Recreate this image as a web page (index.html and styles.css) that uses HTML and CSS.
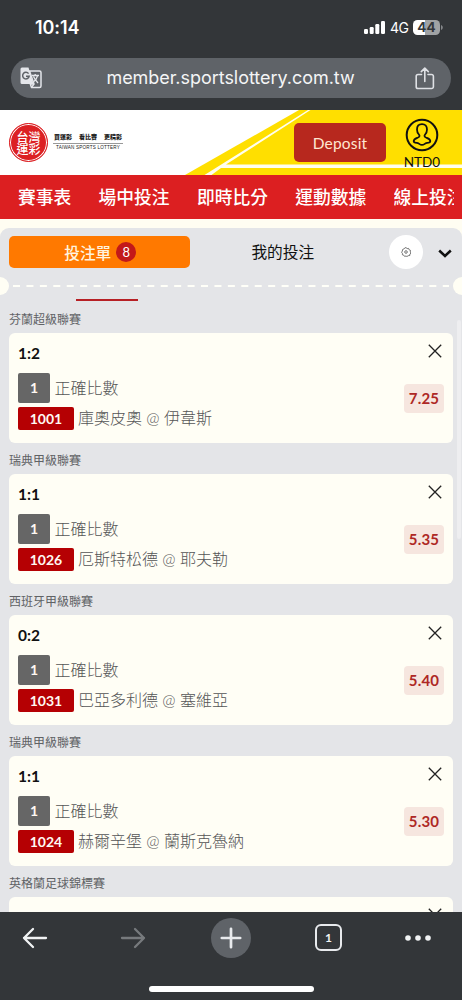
FILE: index.html
```
<!DOCTYPE html>
<html lang="zh-Hant">
<head>
<meta charset="utf-8">
<meta name="viewport" content="width=device-width, initial-scale=1">
<title>台灣運彩</title>
<link rel="stylesheet" href="styles.css">
</head>
<body>
<svg class="defs" width="0" height="0">
  <symbol id="close" viewBox="0 0 14 14"><path d="M.8.8l12.4 12.4M13.2.8L.8 13.2" fill="none" stroke="#222" stroke-width="1.3"/></symbol>
</svg>
<div class="phone">
  <div class="status">
    <span class="clock">10:14</span>
    <div class="signals">
      <svg class="bars" width="21" height="13" viewBox="0 0 21 13" fill="#fff"><rect x="0" y="8" width="4" height="5" rx="1.2"/><rect x="5.7" y="6" width="4" height="7" rx="1.2"/><rect x="11.3" y="3" width="4" height="10" rx="1.2"/><rect x="17" y="0" width="4" height="13" rx="1.2"/></svg>
      <span class="network">4G</span>
      <span class="battery">44</span>
      <svg class="tip" width="2" height="5" viewBox="0 0 2 5"><path d="M0 0c2.400 1 2.400 4 0 5z" fill="#85878a"/></svg>
    </div>
  </div>
  <div class="address">
    <svg class="translate" width="22" height="22" viewBox="0 0 22 22">
      <path d="M9.500 4h10A1.500 1.500 0 0 1 21 5.500V19a1.500 1.500 0 0 1-1.500 1.500h-8L10.300 17H14z" fill="#5f6368" stroke="#e4e6ea" stroke-width="1.500" stroke-linejoin="round"/>
      <path d="M2 .5h6.500L13.500 17H2A1.500 1.500 0 0 1 .5 15.500V2A1.500 1.500 0 0 1 2 .5z" fill="#e4e6ea"/>
      <path d="M8.600 6.600A3.300 3.300 0 1 0 9.200 9.200H6" fill="none" stroke="#5f6368" stroke-width="1.500"/>
      <path d="M12 8.500H19M15.200 7v1.500M17.500 8.800c-.6 2.500-2 4.500-4 6M13.500 9.500c1 2.500 2.500 4.300 4.500 6.500M11.500 20.500L14 17" fill="none" stroke="#e4e6ea" stroke-width="1.300"/>
    </svg>
    <span class="url">member.sportslottery.com.tw</span>
    <svg class="share" width="20" height="23" viewBox="0 0 20 23" fill="none" stroke="#dfe1e5" stroke-width="1.600" stroke-linecap="round" stroke-linejoin="round"><path d="M6.500 7.500H3A1.800 1.800 0 0 0 1.200 9.300v10.400a1.800 1.800 0 0 0 1.800 1.800h13.600a1.800 1.800 0 0 0 1.800-1.800V9.300a1.800 1.800 0 0 0-1.800-1.800H13M9.800 14.500V1.200M6.300 4.600L9.800 1.100l3.500 3.500"/></svg>
  </div>
  <header class="brandbar">
    <svg class="stripes" width="462" height="65" viewBox="0 0 462 65">
      <path d="M185 65L299 0H462V65z" fill="#ffdf00"/>
      <path d="M204.500 65L308 0h2.500L226 54.500H462V58H221L211.500 65z" fill="#fffef0"/>
    </svg>
    <div class="logo"><span>台灣</span><span>運彩</span></div>
    <div class="slogan">
      <div class="slogan-zh"><span>買運彩</span><span>看比賽</span><span>更精彩</span></div>
      <div class="slogan-en">TAIWAN SPORTS LOTTERY</div>
    </div>
    <div class="deposit">Deposit</div>
    <div class="account">
      <svg width="34" height="34" viewBox="0 0 34 34" fill="none" stroke="#111">
        <circle cx="17" cy="17" r="15.300" stroke-width="2"/>
        <path d="M17 6.200c-3.300 0-5 2.300-5 5.200 0 2.100.7 3.700 1.900 5.100 1.100 1.300.6 2.300-.9 3-2.400 1-4.300 1.500-4.300 3.600 0 1.300 1.400 1.800 3 1.800 2.400 0 2.700 2 5.300 2s2.900-2 5.300-2c1.600 0 3-.5 3-1.800 0-2.100-1.900-2.600-4.300-3.600-1.500-.7-2-1.700-.9-3 1.200-1.400 1.900-3 1.900-5.100 0-2.900-1.700-5.200-5-5.200z" stroke-width="1.800"/>
      </svg>
      <span class="balance">NTD0</span>
    </div>
  </header>
  <nav class="nav"><span>賽事表</span><span>場中投注</span><span>即時比分</span><span>運動數據</span><span>線上投注</span></nav>
  <main class="page">
    <section class="panel">
      <div class="tabs">
        <div class="tab active">投注單<span class="count">8</span></div>
        <div class="tab">我的投注</div>
        <div class="settings"><svg width="10" height="10" viewBox="0 0 10 10" fill="none" stroke="#555" stroke-width=".8"><path d="M5 .6l1.100 1 1.500-.2.500 1.400 1.400.6-.2 1.500.7 1.100-1.100 1-.1 1.500-1.500.2L5.900 9.500 5 9l-1.400.4-.8-1.200-1.400-.4V6.300L.5 5.200l.9-1.100.1-1.500L2.900 2l.9-1.100z"/><circle cx="5" cy="5" r="1.300"/></svg></div>
        <svg class="chevron" width="14" height="9" viewBox="0 0 14 9"><path d="M1.200 1.500L7 7l5.800-5.500" fill="none" stroke="#111" stroke-width="2.500"/></svg>
      </div>
      <div class="perforation"><i class="notch"></i><svg width="436" height="2"><path d="M0 1H436" stroke="#fffff8" stroke-width="2" stroke-dasharray="7 6.430"/></svg><i class="notch"></i></div>
      <div class="underline"></div>
      <div class="list">
        <h3>芬蘭超級聯賽</h3>
        <article class="card"><div class="info"><b class="pick">1:2</b><p><i class="leg">1</i><span class="market">正確比數</span></p><p><i class="code">1001</i><span class="teams">庫奧皮奧 @ 伊韋斯</span></p></div><div class="side"><svg class="close"><use href="#close"/></svg><b class="odds">7.25</b></div></article>
        <h3>瑞典甲級聯賽</h3>
        <article class="card"><div class="info"><b class="pick">1:1</b><p><i class="leg">1</i><span class="market">正確比數</span></p><p><i class="code">1026</i><span class="teams">厄斯特松德 @ 耶夫勒</span></p></div><div class="side"><svg class="close"><use href="#close"/></svg><b class="odds">5.35</b></div></article>
        <h3>西班牙甲級聯賽</h3>
        <article class="card"><div class="info"><b class="pick">0:2</b><p><i class="leg">1</i><span class="market">正確比數</span></p><p><i class="code">1031</i><span class="teams">巴亞多利德 @ 塞維亞</span></p></div><div class="side"><svg class="close"><use href="#close"/></svg><b class="odds">5.40</b></div></article>
        <h3>瑞典甲級聯賽</h3>
        <article class="card"><div class="info"><b class="pick">1:1</b><p><i class="leg">1</i><span class="market">正確比數</span></p><p><i class="code">1024</i><span class="teams">赫爾辛堡 @ 蘭斯克魯納</span></p></div><div class="side"><svg class="close"><use href="#close"/></svg><b class="odds">5.30</b></div></article>
        <h3>英格蘭足球錦標賽</h3>
        <article class="card cut"><div class="info"></div><div class="side"><svg class="close"><use href="#close"/></svg></div></article>
      </div>
      <div class="scrollbar"></div>
    </section>
  </main>
  <footer class="toolbar">
    <div class="tools">
      <svg width="26" height="22" viewBox="0 0 26 22" fill="none" stroke="#f1f3f4" stroke-width="2.300" stroke-linecap="round" stroke-linejoin="round"><path d="M24 11H2M11 2L2 11l9 9"/></svg>
      <svg width="26" height="22" viewBox="0 0 26 22" fill="none" stroke="#777a7d" stroke-width="2.300" stroke-linecap="round" stroke-linejoin="round"><path d="M2 11h22M15 2l9 9-9 9"/></svg>
      <svg width="40" height="40" viewBox="0 0 40 40"><circle cx="20" cy="20" r="20" fill="#5f6368"/><path d="M10.800 20h18.400M20 10.800v18.400" stroke="#e8eaed" stroke-width="2.700" stroke-linecap="round"/></svg>
      <div class="tabcount">1</div>
      <svg width="26" height="6" viewBox="0 0 26 6" fill="#f1f3f4"><circle cx="3" cy="3" r="2.800"/><circle cx="13" cy="3" r="2.800"/><circle cx="23" cy="3" r="2.800"/></svg>
    </div>
    <div class="home"></div>
  </footer>
</div>
</body>
</html>
```
FILE: styles.css
```
* { box-sizing: border-box; }
body { margin: 0; background: #333639; font-family: Lato, "Noto Sans CJK TC", sans-serif; }
i { font-style: normal; }
svg { display: block; flex: none; }
.defs { position: absolute; }
.phone { width: 462px; height: 1000px; overflow: hidden; display: flex; flex-direction: column; }
.phone > * { flex: none; }

.status { height: 58px; padding: 0 19px 0 35px; display: flex; justify-content: space-between; font-family: Inter, sans-serif; color: #fff; }
.clock { font-size: 18px; font-weight: 600; line-height: 56px; letter-spacing: -.1px; }
.signals { height: 55px; display: flex; align-items: center; }
.network { margin-left: 5px; width: 23px; font-size: 14px; letter-spacing: -.5px; }
.battery { width: 27px; height: 15px; border-radius: 4.500px; background: linear-gradient(90deg, #fff 44%, #a0a2a4 44%); color: #333639; font-weight: 700; font-size: 13.500px; line-height: 15px; text-align: center; }
.tip { margin-left: 1px; }

.address { margin: 0 11px 12px; height: 40px; border-radius: 20px; background: #5f6368; display: flex; align-items: center; justify-content: space-between; padding: 0 16px 0 9px; }
.url { font-family: Inter, sans-serif; font-size: 18px; color: #f4f5f6; letter-spacing: -.04px; white-space: nowrap; margin: -2px 0 0 4px; }

.brandbar { height: 65px; background: #fff; display: flex; align-items: flex-start; padding-left: 9px; position: relative; }
.stripes { position: absolute; left: 0; top: 0; }
.brandbar > div { position: relative; flex: none; }
.logo { width: 39px; height: 39px; margin-top: 13px; border-radius: 50%; background: #dc2023; border: 1px solid #dc2023; box-shadow: inset 0 0 0 1px #fff; color: #fff; font: 500 12px/12px "Noto Sans CJK TC", sans-serif; display: flex; flex-direction: column; align-items: center; justify-content: center; }
.slogan { width: 70px; margin: 23px 0 0 5px; color: #222; }
.slogan-zh { display: flex; justify-content: space-between; padding: 0 1px; font: 900 6px/8px "Noto Sans CJK TC", sans-serif; height: 11px; border-bottom: 1px solid #999; }
.slogan-en { font: 400 4.600px/8px "Liberation Sans", sans-serif; text-align: center; letter-spacing: .2px; white-space: nowrap; }
.deposit { width: 92px; height: 39px; margin: 13px 0 0 171px; border-radius: 5px; background: #b7281e; color: #ffe6d2; font-size: 15.500px; line-height: 40px; text-align: center; letter-spacing: .2px; }
.account { width: 50px; margin: 8px 0 0 11px; display: flex; flex-direction: column; align-items: center; color: #111; }
.balance { font-size: 13.500px; line-height: 18px; margin-top: 1px; }

.nav { height: 44px; background: #dc1f21; color: #fff; display: flex; gap: 27.300px; padding-left: 18px; overflow: hidden; white-space: nowrap; font-size: 17.750px; line-height: 43px; font-weight: 500; font-family: "Noto Sans CJK TC", sans-serif; }
.nav span { flex: none; }
.nav span:last-child { width: 60px; overflow: hidden; }

.page { height: 693px; background: #fffdf2; padding-top: 9px; }
.panel { height: 684px; background: #e4e5e8; border-radius: 9px 9px 0 0; overflow: hidden; position: relative; }
.tabs { height: 48px; padding: 8px 10px 8px 9px; display: flex; align-items: center; }
.tab { width: 187px; height: 32px; padding-bottom: 1px; font-size: 15.700px; color: #111; display: flex; align-items: center; justify-content: center; }
.tab.active { width: 181px; padding: 0 0 0 2px; background: #ff7900; border-radius: 5px; color: #fff3df; font-weight: 500; }
.count { width: 20px; height: 20px; margin-left: 5px; border-radius: 50%; background: #c31919; color: #fff; font-size: 13px; font-weight: 400; line-height: 20px; text-align: center; }
.settings { width: 34px; height: 34px; margin-left: 13px; border-radius: 50%; background: #fff; display: flex; align-items: center; justify-content: center; }
.chevron { margin: 2px 0 0 15px; }
.perforation { height: 18px; margin: 1px -9px 0; display: flex; align-items: center; justify-content: center; gap: 4px; }
.perforation svg { margin: 0; }
.perforation .notch { flex: none; }
.notch { width: 18px; height: 18px; border-radius: 50%; background: #fffef4; }
.underline { width: 62px; height: 2px; margin: 4px 0 0 76px; background: #b72025; }
.list { padding: 1px 9px 0; }
h3 { margin: 0; height: 31px; padding-top: 9px; font-size: 12px; line-height: 18px; font-weight: 400; color: #606265; }
.card { height: 110px; border-radius: 6px; background: #fffef5; display: flex; justify-content: space-between; padding: 0 9px; }
.info { padding-top: 10px; }
.pick { display: block; height: 21px; font-size: 15.500px; line-height: 20px; color: #111; }
.card p { margin: 0; display: flex; align-items: center; font-size: 16px; line-height: 24px; color: #555; white-space: nowrap; font-weight: 300; }
.card p:nth-of-type(1) { margin-top: 9px; height: 30px; }
.card p:nth-of-type(2) { margin-top: 4px; height: 23px; }
.card p i { color: #fff8f2; font-weight: 700; font-size: 14px; text-align: center; border-radius: 2px; }
.leg { width: 32px; height: 30px; line-height: 29px; background: #666; }
.code { width: 56px; height: 23px; line-height: 23px; background: #b50003; }
.market { margin: -1px 0 0 4.500px; }
.teams { margin: -1px 0 0 4px; }
.side { display: flex; flex-direction: column; align-items: flex-end; }
.close { width: 14px; height: 14px; margin: 11px 2px 0 0; }
.odds { width: 40px; height: 29px; margin-top: 26px; border-radius: 4px; background: #f6e6df; color: #ae2825; font: 700 15px/29px Lato, sans-serif; text-align: center; letter-spacing: .2px; }
.cut { height: 15px; border-radius: 6px 6px 0 0; }
.scrollbar { position: absolute; right: 1px; top: 92px; width: 4px; height: 219px; border-radius: 2px; background: #eeeef0; }

.toolbar { height: 88px; background: #333639; display: flex; flex-direction: column; padding: 5px 31px 0 22px; }
.tools { height: 41px; display: grid; grid-template-columns: 98px 87px 106px 92px 26px; align-items: center; }
.tabcount { width: 27px; height: 27px; border: 2px solid #e8eaed; border-radius: 6px; color: #f1f3f4; font: 700 12px/23px Lato, sans-serif; text-align: center; }
.home { width: 165px; height: 6px; margin: 28px 0 0 127px; border-radius: 3px; background: #fff; }
.tools > :nth-child(3) { margin-left: 4px; }
.tools > :nth-child(4) { margin-left: 2px; }
```
